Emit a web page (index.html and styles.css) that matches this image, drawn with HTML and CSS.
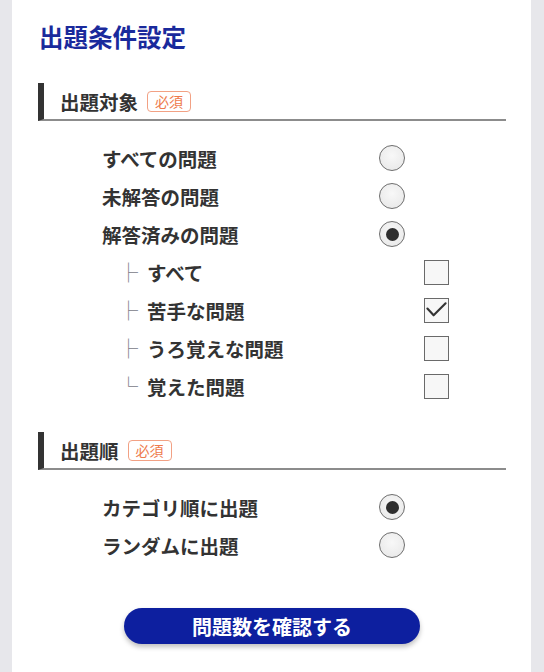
FILE: index.html
```html
<!DOCTYPE html>
<html lang="ja">
<head>
<meta charset="utf-8">
<link rel="stylesheet" href="styles.css">
</head>
<body>
<main class="panel">
  <h1 class="title">出題条件設定</h1>

  <section class="group">
    <h2 class="group-head">出題対象<span class="badge">必須</span></h2>
    <ul class="options">
      <li class="opt"><span class="label">すべての問題</span><span class="radio"></span></li>
      <li class="opt"><span class="label">未解答の問題</span><span class="radio"></span></li>
      <li class="opt"><span class="label">解答済みの問題</span><span class="radio checked"></span></li>
      <li class="opt sub"><span class="tree">├</span><span class="label">すべて</span><span class="check"></span></li>
      <li class="opt sub"><span class="tree">├</span><span class="label">苦手な問題</span><span class="check"><svg viewBox="0 0 24 24" width="24" height="24"><path d="M2.5 10.5 L9 17.5 L21.5 5" fill="none" stroke="#333" stroke-width="2.2" stroke-linecap="round" stroke-linejoin="round"/></svg></span></li>
      <li class="opt sub"><span class="tree">├</span><span class="label">うろ覚えな問題</span><span class="check"></span></li>
      <li class="opt sub"><span class="tree">└</span><span class="label">覚えた問題</span><span class="check"></span></li>
    </ul>
  </section>

  <section class="group second">
    <h2 class="group-head">出題順<span class="badge">必須</span></h2>
    <ul class="options">
      <li class="opt"><span class="label">カテゴリ順に出題</span><span class="radio checked"></span></li>
      <li class="opt"><span class="label">ランダムに出題</span><span class="radio"></span></li>
    </ul>
  </section>

  <div class="actions">
    <button class="confirm" type="button">問題数を確認する</button>
  </div>
</main>
</body>
</html>
```

FILE: styles.css
```css
* { box-sizing: border-box; }

html, body {
  margin: 0;
  padding: 0;
  background: #e7e7eb;
  font-family: "Noto Sans CJK JP", "Noto Sans", sans-serif;
  color: #333;
}

.panel {
  width: 519px;
  min-height: 672px;
  margin-left: 12px;
  background: #fff;
  padding: 19px 25px 30px 26px;
}

.title {
  margin: 0 0 0 1px;
  font-size: 24.5px;
  line-height: 36px;
  font-weight: 700;
  color: #1a2a9c;
}

.group { margin-top: 28px; }
.group.second { margin-top: 27px; }

.group-head {
  margin: 0;
  height: 38px;
  display: flex;
  align-items: center;
  padding-left: 16px;
  border-left: 6px solid #333;
  border-bottom: 2px solid #8c8c8c;
  font-size: 19.5px;
  font-weight: 700;
  color: #333;
}

.badge {
  margin-left: 9px;
  font-size: 14px;
  line-height: 19px;
  font-weight: 400;
  color: #ee7a4c;
  border: 1px solid #f2a184;
  border-radius: 4px;
  padding: 0 7px;
}

.options {
  list-style: none;
  margin: 18px 0 0;
  padding: 0;
}

.opt {
  height: 38px;
  display: flex;
  align-items: center;
  padding-left: 64px;
}

.label {
  font-size: 19.5px;
  font-weight: 700;
  color: #333;
  width: 277px;
}

.sub { padding-left: 81px; }

.tree {
  font-family: "Noto Sans CJK JP", sans-serif;
  font-size: 19px;
  line-height: 20px;
  font-weight: 300;
  color: #7a7a88;
  width: 28px;
}

.radio {
  width: 26px;
  height: 26px;
  border-radius: 50%;
  border: 1.5px solid #6e6e6e;
  background: radial-gradient(circle at 50% 40%, #f8f8f8, #e6e6e6);
  display: flex;
  align-items: center;
  justify-content: center;
}

.radio.checked::after {
  content: "";
  width: 13px;
  height: 13px;
  border-radius: 50%;
  background: #2e2e2e;
}

.check {
  width: 25px;
  height: 25px;
  border: 1.5px solid #6a6a6a;
  background: #f7f7f7;
  display: flex;
  align-items: center;
  justify-content: center;
}

.check svg { display: block; }

.actions {
  display: flex;
  margin-top: 44px;
  padding-left: 86px;
}

.confirm {
  width: 296px;
  height: 36px;
  border: none;
  border-radius: 18px;
  background: #0d1f9f;
  color: #fff;
  font-family: "Noto Sans CJK JP", "Noto Sans", sans-serif;
  font-size: 20px;
  font-weight: 700;
  box-shadow: 0 3px 5px rgba(0, 0, 0, 0.25);
  cursor: pointer;
}
```
